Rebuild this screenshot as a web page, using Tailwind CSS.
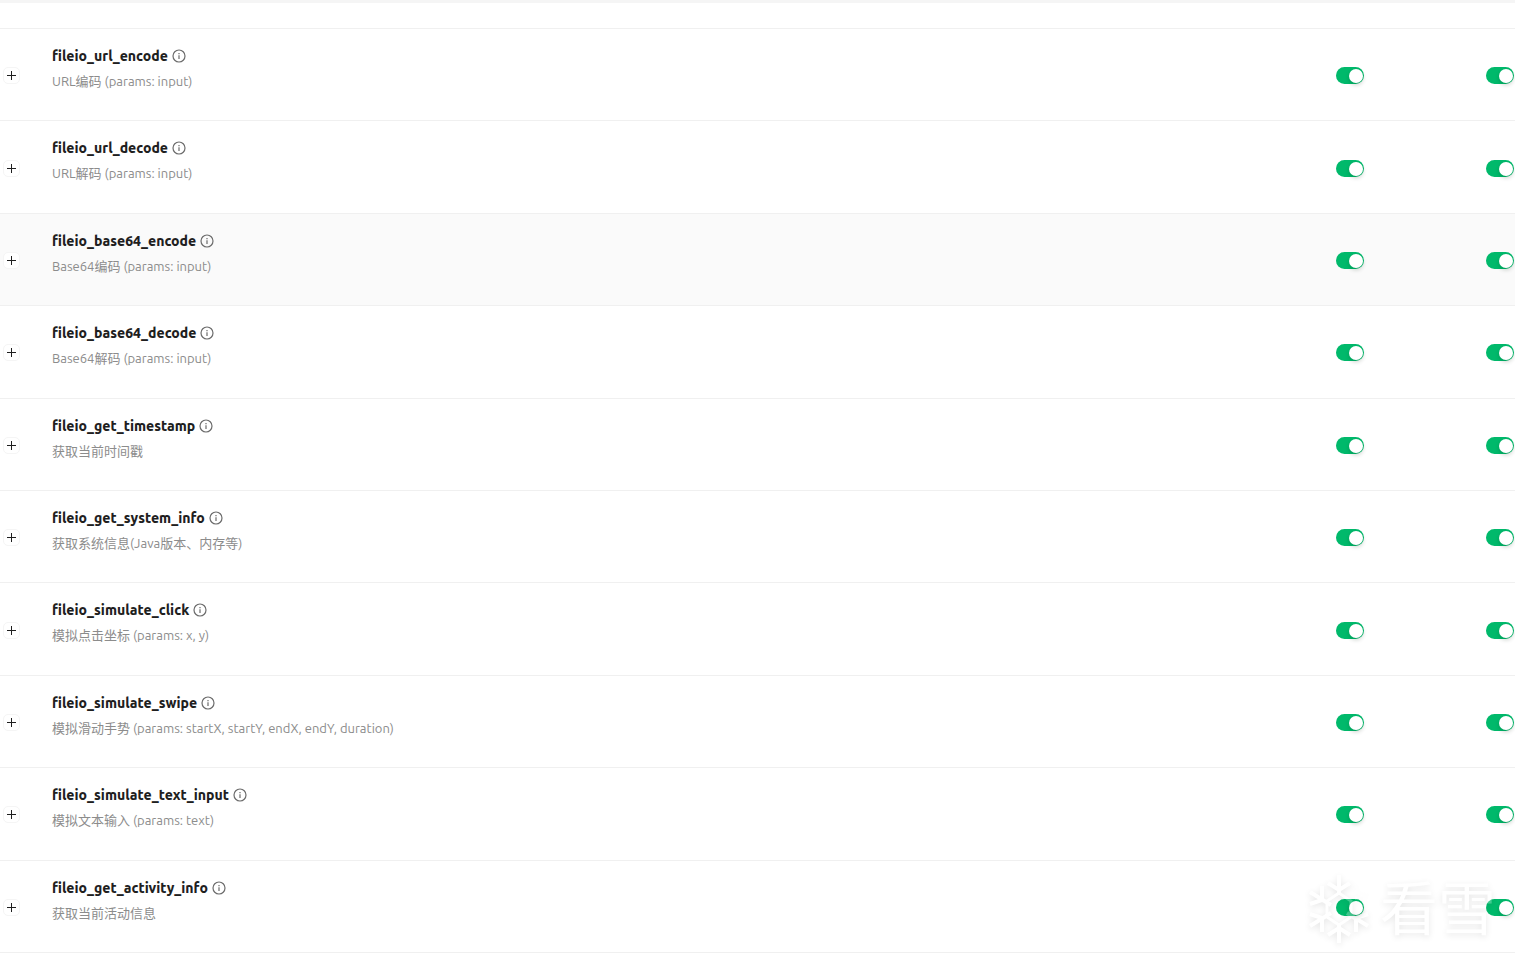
<!DOCTYPE html>
<html lang="zh-CN">
<head>
  <meta charset="UTF-8" />
  <meta name="viewport" content="width=device-width, initial-scale=1.0"/>
  <title>MCP Tools</title>
  <script src="https://cdn.jsdelivr.net/npm/@tailwindcss/browser@4"></script>
  <style>
    body {
      font-family: Ubuntu, 'Noto Sans', 'Noto Sans CJK SC', sans-serif;
    }
  </style>
</head>
<body class="bg-white text-[#1f1f1f] overflow-x-hidden">

  <div class="relative min-h-screen">
    <div class="h-[29px] border-t-3 border-t-[#f5f5f5] border-b border-b-[#f0f0f0]"></div>

    <table class="w-full table-fixed border-separate border-spacing-0">
      <colgroup>
        <col class="w-[36px]" />
        <col />
        <col class="w-[150px]" />
        <col class="w-[45px]" />
      </colgroup>
      <tbody id="toolList"></tbody>
    </table>

    <!-- Watermark -->
    <div class="absolute right-[19px] top-[872px] flex items-center gap-2 text-white opacity-25 pointer-events-none drop-shadow-[0_2px_3px_rgba(0,0,0,0.4)]">
      <svg class="w-[66px] h-[74px]" viewBox="0 0 66 74" fill="none" stroke="currentColor" stroke-width="4">
        <path d="M33 3V21M22 11L33 18L44 11M33 71V53M22 63L33 56L44 63" />
        <path d="M4 20L25 33M16 14V28L4 32M4 54L25 41M16 60V46L4 42M62 54L41 41M50 60V46L62 42" />
        <path stroke-width="3" d="M33 21L45 29V45L33 53L21 45V29Z" />
        <path stroke-width="1" stroke-dasharray="3 3" d="M62 20L43 31M50 12V26L62 32" />
      </svg>
      <span class="text-[58px] leading-[74px] font-normal">看雪</span>
    </div>
  </div>

  <script>
    const tools = [
      { name: "fileio_url_encode", description: "URL编码 (params: input)" },
      { name: "fileio_url_decode", description: "URL解码 (params: input)" },
      { name: "fileio_base64_encode", description: "Base64编码 (params: input)", active: true },
      { name: "fileio_base64_decode", description: "Base64解码 (params: input)" },
      { name: "fileio_get_timestamp", description: "获取当前时间戳" },
      { name: "fileio_get_system_info", description: "获取系统信息(Java版本、内存等)" },
      { name: "fileio_simulate_click", description: "模拟点击坐标 (params: x, y)" },
      { name: "fileio_simulate_swipe", description: "模拟滑动手势 (params: startX, startY, endX, endY, duration)" },
      { name: "fileio_simulate_text_input", description: "模拟文本输入 (params: text)" },
      { name: "fileio_get_activity_info", description: "获取当前活动信息" },
    ];

    const switchClass = "relative block appearance-none w-[28px] h-[17px] rounded-full cursor-pointer bg-gray-300 checked:bg-[#00b96b] before:absolute before:top-[2px] before:left-[2px] checked:before:left-[13px] before:size-[14px] before:rounded-full before:bg-white before:shadow-[0_2px_4px_rgba(0,35,11,0.2)]";

    document.getElementById("toolList").innerHTML = tools.map((tool) => `
      <tr class="${tool.active ? "bg-[#fafafa]" : "bg-white"}">
        <td class="border-b border-[#f0f0f0] pt-[2px] pl-[3px] align-middle">
          <button aria-label="Expand ${tool.name}" class="flex items-center justify-center size-[17px] rounded-[5px] border border-[#f5f5f5] bg-white">
            <svg class="size-[9px]" viewBox="0 0 9 9" stroke="#1f1f1f" stroke-width="1"><path d="M0 4.5H9M4.5 0V9" /></svg>
          </button>
        </td>
        <td class="border-b border-[#f0f0f0] p-4">
          <div class="flex items-center gap-1 h-[22px]">
            <strong class="text-[14px] leading-[22px] font-extrabold">${tool.name}</strong>
            <svg class="size-[14px]" viewBox="0 0 14 14" fill="none" stroke="#6b6b6b" stroke-width="1.2">
              <circle cx="7" cy="7" r="6" />
              <path d="M7 6.2V10M7 4V5.2" />
            </svg>
          </div>
          <p class="mt-1 mb-[13px] text-[13px] leading-[1.57] text-[#8c8c8c]">${tool.description}</p>
        </td>
        <td class="border-b border-[#f0f0f0] pt-[2px] pl-4 align-middle">
          <input type="checkbox" role="switch" aria-label="Enable ${tool.name}" class="${switchClass}" checked />
        </td>
        <td class="border-b border-[#f0f0f0] pt-[2px] pl-4 align-middle">
          <input type="checkbox" role="switch" aria-label="Auto approve ${tool.name}" class="${switchClass}" checked />
        </td>
      </tr>
    `).join("");
  </script>

</body>
</html>
